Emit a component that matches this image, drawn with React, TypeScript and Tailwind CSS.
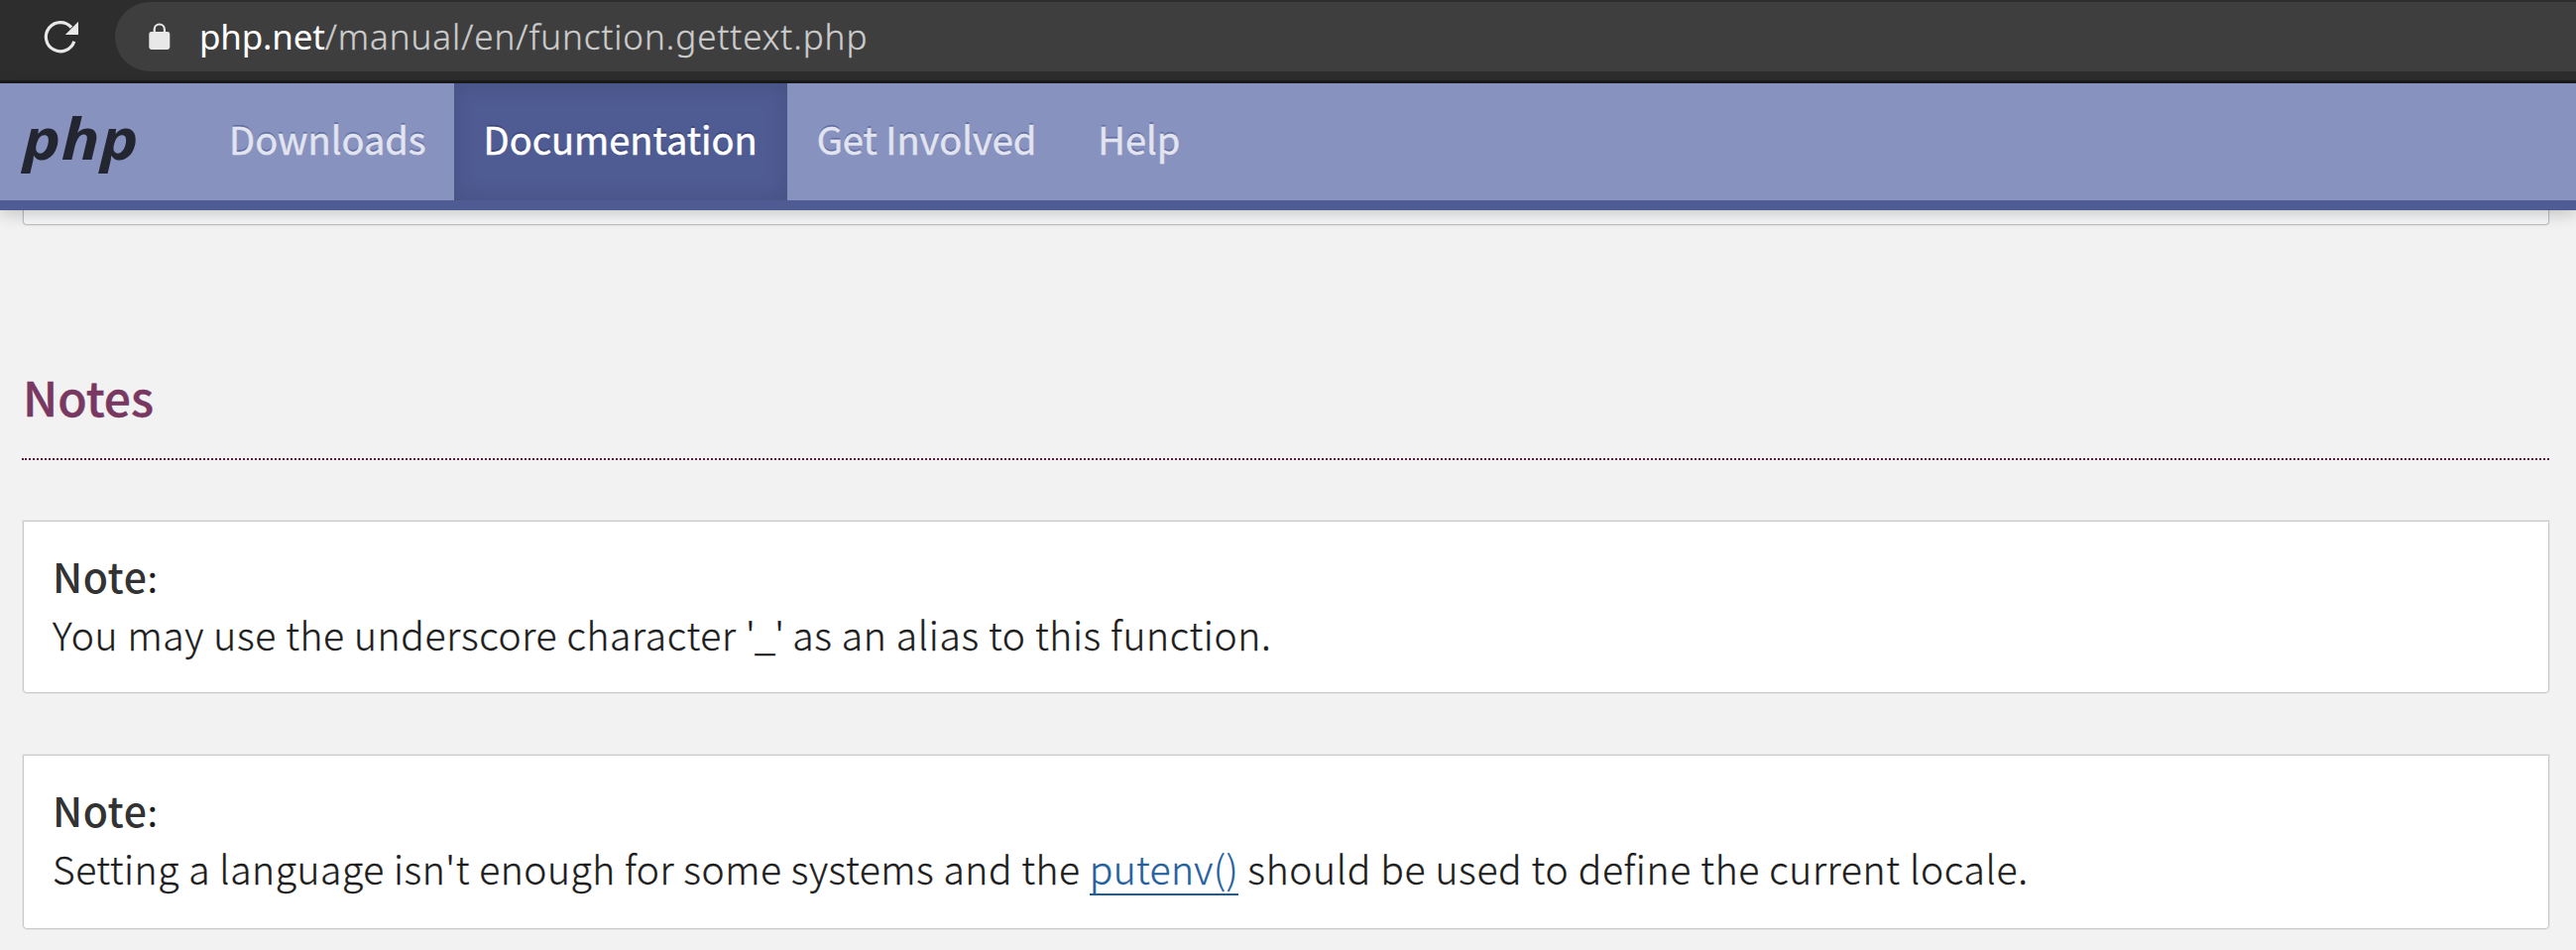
import type { ReactNode } from "react";

const navItems = [
  { label: "Downloads", active: false },
  { label: "Documentation", active: true },
  { label: "Get Involved", active: false },
  { label: "Help", active: false },
];

function ReloadIcon() {
  return (
    <svg className="ml-[43px] h-[36px] w-[38px] shrink-0" viewBox="43 18 38 36" fill="none">
      <path d="M72 26.6A14.6 14.6 0 1 0 74.8 40.8" stroke="#e8e8e8" strokeWidth="3.2" />
      <path d="M79 20.8V34H65.8Z" fill="#e8e8e8" />
    </svg>
  );
}

function LockIcon() {
  return (
    <svg className="h-[28px] w-[22px] shrink-0" viewBox="0 0 22 28" fill="none">
      <path d="M5.7 11V6.6a5.1 5.1 0 0 1 10.2 0V11" stroke="#e8e8e8" strokeWidth="2.2" />
      <rect x="0.3" y="9" width="21" height="18" rx="2.4" fill="#e8e8e8" />
    </svg>
  );
}

function BrowserBar() {
  return (
    <div className="flex h-[84px] items-start border-b-[3px] border-[#1b1b1b] bg-[#2d2d2d] pt-[2px]">
      <div className="flex h-[69px] items-center">
        <ReloadIcon />
      </div>
      <div className="ml-[35px] flex h-[70px] flex-1 items-center rounded-l-full bg-[#3e3e3e] pl-[34px]">
        <LockIcon />
        <div className="ml-[29px] whitespace-pre pb-[1px] font-['Noto_Sans',sans-serif] text-[35px] leading-[48px]">
          <span className="tracking-[-0.2px] text-white">php.net</span>
          <span className="font-light tracking-[0.95px] text-[#cccccc] [-webkit-text-stroke:0.3px_#cccccc]">
            /manual/en/function.gettext.php
          </span>
        </div>
      </div>
    </div>
  );
}

function Header() {
  return (
    <header className="relative flex h-[128px] border-b-[10px] border-[#4f5b93] bg-[#8892bf] shadow-[0_4px_16px_rgba(0,0,0,0.2)]">
      <div className="w-[202px] pl-[23px] pt-[24px]">
        <div className="w-fit origin-left scale-x-[1.11] font-['Open_Sans',sans-serif] text-[58px] font-bold italic leading-[62px] tracking-[0.5px] text-[#232531]">
          php
        </div>
      </div>
      <nav className="flex">
        {navItems.map((item) => (
          <a
            key={item.label}
            className={
              item.active
                ? "flex h-[118px] w-[336px] items-center justify-center bg-[#4f5b93] pb-[8px] text-white shadow-[inset_0_0_24px_rgba(0,0,0,0.12)] [-webkit-text-stroke:0.5px_#ffffff] [text-shadow:0_-2px_0_rgba(30,36,80,0.4)]"
                : "flex h-[118px] items-center pl-[30px] pr-[32px] pb-[8px] text-[#e2e4ef] [-webkit-text-stroke:0.5px_#e2e4ef] [text-shadow:0_-2px_0_rgba(79,91,147,0.65)] first:pl-[29px] first:pr-[28px]"
            }
          >
            {item.label}
          </a>
        ))}
      </nav>
    </header>
  );
}

function Note({ className, children }: { className: string; children: ReactNode }) {
  return (
    <div
      className={`rounded-b-[4px] border border-[#c8c8c8] bg-white pl-[29px] shadow-[0_0_0_1px_#e8e8e8] ${className}`}
    >
      <p className="h-[59px] text-[38px] leading-[59px]">
        <strong className="text-[41px] font-medium tracking-[0.6px] text-[#333333]">Note</strong>
        <span className="font-normal">:</span>
      </p>
      <p className="h-[59px] whitespace-pre text-[39px] leading-[59px] [-webkit-text-stroke:0.3px]">{children}</p>
    </div>
  );
}

export default function App() {
  return (
    <div className="h-[958px] w-[2598px] overflow-hidden bg-[#f2f2f2] font-['Noto_Sans_CJK_SC',sans-serif] text-[38px] text-[#1c1c1c]">
      <BrowserBar />
      <Header />
      <main className="ml-[22px] w-[2549px] font-light">
        <div className="ml-px h-[15px] rounded-b-[4px] border border-t-0 border-[#c0c0c0] bg-[#f7f8f9] shadow-[0_0_0_1px_#e8e8e8]" />
        <h2 className="mt-[136px] h-[101px] border-b-2 border-dotted border-[#5f1842] pt-[1px] pl-[1px] text-[48px] font-medium leading-[70px] text-[#793862] [-webkit-text-stroke:0.4px]">
          Notes
        </h2>
        <Note className="ml-px mt-[61px] h-[174px] pt-[25px]">
          <span className="tracking-[0.65px]">
            You may use the underscore character <span className="tracking-[-1px]">'_'</span> as an alias to this
            function.
          </span>
        </Note>
        <Note className="ml-px mt-[62px] h-[176px] pt-[25px]">
          <span className="tracking-[0.56px]">
            {"Setting a language isn't enough for some systems and the "}
          </span>
          <a className="inline-block h-[57px] border-b-2 border-[#1f5c9c] leading-[59px] tracking-[0.35px] text-[#23609f]">
            putenv()
          </a>
          <span className="tracking-[0.67px]">{" should be used to define the current locale."}</span>
        </Note>
      </main>
    </div>
  );
}
